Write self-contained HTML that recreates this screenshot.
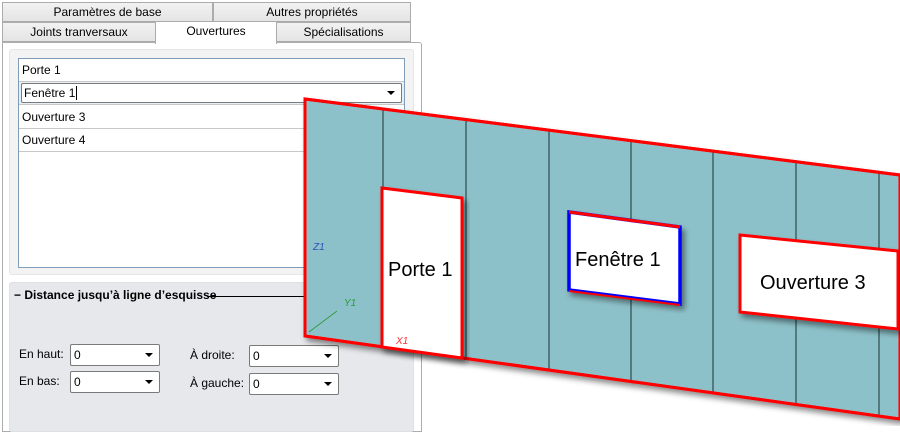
<!DOCTYPE html>
<html><head><meta charset="utf-8"><style>
*{box-sizing:border-box;margin:0;padding:0}
body{width:900px;height:426px;background:#fff;position:relative;overflow:hidden;font-family:"Liberation Sans",sans-serif;font-size:12px;color:#000}
.a{position:absolute}
.tab{position:absolute;height:20px;background:linear-gradient(#f2f2f2,#e4e4e4);border:1px solid #acacac;text-align:center;line-height:18px;font-size:12px}
.cb{position:absolute;background:#fff;border:1px solid #7a7a7a;border-radius:2px;height:22px;line-height:20px;padding-left:3px}
.cb:after{content:"";position:absolute;right:6px;top:8px;border-left:4px solid transparent;border-right:4px solid transparent;border-top:4px solid #000}
.row{position:absolute;left:19px;width:385px;height:23px;border-bottom:1px solid #c8c8c8;line-height:22px;padding-left:3px;background:#fff}
</style></head><body>
<div class="a" style="left:2px;top:42px;width:420px;height:390px;background:#fff;border:1px solid #acacac;border-radius:0 3px 0 0"></div>
<div class="tab" style="left:2px;top:2px;width:211px">Paramètres de base</div>
<div class="tab" style="left:213px;top:2px;width:198px">Autres propriétés</div>
<div class="tab" style="left:2px;top:22px;width:154px">Joints tranversaux</div>
<div class="tab" style="left:276px;top:22px;width:135px">Spécialisations</div>
<div class="tab" style="left:155px;top:21px;width:122px;height:23px;background:#fff;border-bottom:none">Ouvertures</div>
<div class="a" style="left:9px;top:49px;width:405px;height:226px;background:#f3f3f3;border:1px solid #e6e6e6;border-radius:3px"></div>
<div class="a" style="left:18px;top:58px;width:387px;height:210px;background:#fff;border:1px solid #7f9db9"></div>
<div class="row" style="top:59px">Porte 1</div>
<div class="row" style="top:82px;background:#e8eef6;padding:1px 2px"><div style="background:#fff;border:1px solid #7a7a7a;border-radius:2px;height:20px;line-height:18px;padding-left:2px;position:relative">Fenêtre 1<span style="border-left:1px solid #000;margin-left:1px"></span><span style="position:absolute;right:6px;top:7px;border-left:4px solid transparent;border-right:4px solid transparent;border-top:4px solid #000"></span></div></div>
<div class="row" style="top:106px">Ouverture 3</div>
<div class="row" style="top:129px">Ouverture 4</div>
<div class="a" style="left:9px;top:282px;width:405px;height:150px;background:#e6e8ec;border:1px solid #dde0e4;border-radius:3px"></div>
<div class="a" style="left:14px;top:288px;font-weight:bold">− Distance jusqu’à ligne d’esquisse</div>
<div class="a" style="left:207px;top:296px;width:110px;height:1px;background:#000"></div>
<div class="a" style="left:19px;top:347px">En haut:</div>
<div class="a" style="left:19px;top:374px">En bas:</div>
<div class="a" style="left:190px;top:348px">À droite:</div>
<div class="a" style="left:190px;top:376px">À gauche:</div>
<div class="cb" style="left:70px;top:344px;width:90px">0</div>
<div class="cb" style="left:70px;top:371px;width:90px">0</div>
<div class="cb" style="left:249px;top:345px;width:90px">0</div>
<div class="cb" style="left:249px;top:373px;width:90px">0</div>
<svg class="a" style="left:0;top:0" width="900" height="426" viewBox="0 0 900 426">
<defs><filter id="s" x="-5%" y="-5%" width="115%" height="115%"><feDropShadow dx="3" dy="4" stdDeviation="3" flood-opacity="0.45"/></filter></defs>
<polygon points="305,99 900,175 900,419 305,336" fill="#8dc1c9" stroke="#ff0000" stroke-width="3" filter="url(#s)"/>
<g stroke="#2d4a4e" stroke-width="1.2">
<line x1="383" y1="109" x2="383" y2="347"/><line x1="466" y1="120" x2="466" y2="359"/><line x1="549" y1="130" x2="549" y2="370"/><line x1="631" y1="141" x2="631" y2="382"/><line x1="713" y1="151" x2="713" y2="393"/><line x1="796" y1="162" x2="796" y2="405"/><line x1="879" y1="172" x2="879" y2="416"/></g>
<polygon points="305,99 900,175 900,419 305,336" fill="none" stroke="#ff0000" stroke-width="3"/>
<polygon points="382,188 462,198 462,358 382,347" fill="#fff" stroke="#ff0000" stroke-width="3" filter="url(#s)"/>
<polygon points="569,212 680,227 680,304 569,290" fill="#fff" stroke="#0000ff" stroke-width="3.5" filter="url(#s)"/>
<polyline points="569,212 680,227" stroke="#ff0000" stroke-width="3" fill="none"/>
<polyline points="569,291 680,305" stroke="#ff0000" stroke-width="2" fill="none"/>
<polygon points="740,235 898,251 898,329 740,312" fill="#fff" stroke="#ff0000" stroke-width="3" filter="url(#s)"/>
<text x="388" y="276" font-family="Liberation Sans" font-size="20">Porte 1</text>
<text x="575" y="266" font-family="Liberation Sans" font-size="20">Fenêtre 1</text>
<text x="760" y="289" font-family="Liberation Sans" font-size="20">Ouverture 3</text>
<line x1="309" y1="332" x2="337" y2="311" stroke="#2a9a3a" stroke-width="0.8"/>
<text x="344" y="306" font-size="10" fill="#2a9a3a" font-style="italic">Y1</text>
<text x="313" y="250" font-size="10" fill="#3050c0" font-style="italic">Z1</text>
<text x="396" y="344" font-size="10" fill="#ff3030" font-style="italic">X1</text>
</svg>
</body></html>
